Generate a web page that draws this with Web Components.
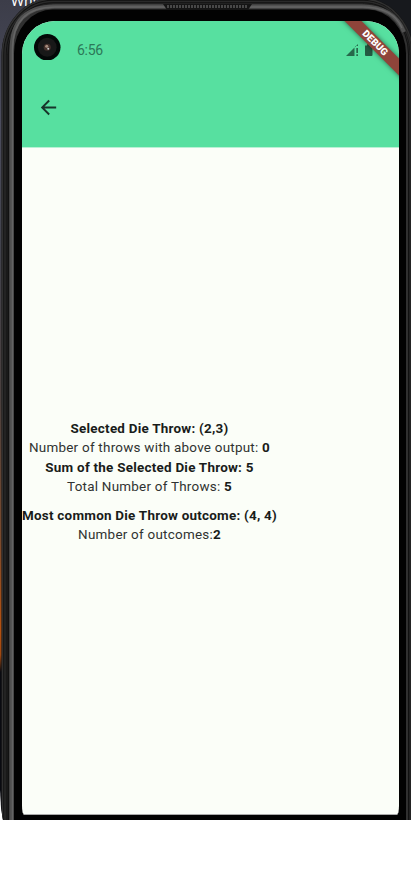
<!DOCTYPE html>
<html lang="en"><head><meta charset="utf-8"><title>Die throws</title>
<style>html,body{margin:0;background:#fff}body{width:411px;height:880px;overflow:hidden;font-family:Roboto,"Liberation Sans",sans-serif}</style></head>
<body>
<device-frame>
  <app-screen>
    <status-bar slot="top"></status-bar>
    <app-bar slot="top"></app-bar>
    <throw-stats></throw-stats>
    <debug-banner slot="overlay"></debug-banner>
  </app-screen>
</device-frame>
<script>
const define=(name,html)=>customElements.define(name,class extends HTMLElement{
  constructor(){super();this.attachShadow({mode:'open'}).innerHTML=html;}
});
define('device-frame',`<style>
:host{display:block;position:relative;width:411px;height:820px;overflow:hidden;box-sizing:border-box;padding:21px 12px 5px 22px;
 background:linear-gradient(90deg,transparent 330px,#17191d 331px),linear-gradient(#3c3d49 0,#4c4d5e 120px,#42434d 250px,#4b403e 400px,#7b4a2c 540px,#b6510f 630px,#a04810 655px,#090a10 672px,#090a10 810px);
 clip-path:polygon(0 0,411px 0,411px 820px,3px 820px,1px 808px,0 790px)}
.case{position:absolute;inset:0;width:411px;height:820px}
::slotted(*){position:relative}
</style>
<svg class="case" viewBox="0 0 411 820">
 <text x="11" y="6" font-size="14" fill="#fff" font-family="Noto Sans,sans-serif">Why</text>
 <rect x="1.5" y="-2" width="412" height="934" rx="51" ry="57" fill="#111"/>
 <rect x="2.5" y="-1" width="410" height="932" rx="50" ry="56" fill="none" stroke="#303030" stroke-width="1.5"/>
 <rect x="5" y="1.5" width="406" height="928" rx="48" ry="53" fill="none" stroke="#292929" stroke-width="1.6"/>
 <rect x="7" y="3.5" width="402.5" height="924" rx="46" ry="51" fill="none" stroke="#222" stroke-width="1"/>
 <rect x="9" y="4" width="399" height="924" rx="44" ry="50" fill="#303030"/>
 <path d="M11.5 820V50Q11.5 6.500 55 6.500H362Q394 6.500 404 32" fill="none" stroke="#505050" stroke-width="4"/>
 <path d="M12.5 820V50Q12.500 7 55 7H362Q393 7 402 28" fill="none" stroke="#646464" stroke-width="1.5"/>
 <rect x="14" y="9.5" width="392" height="919" rx="39" ry="44" fill="#020202"/>
 <path d="M163 4H252L248 10H167Z" fill="#151515"/>
 <path d="M167 6.500H248" stroke="#484848" stroke-width="3" stroke-dasharray="2 1"/>
</svg><slot></slot>`);
define('app-screen',`<style>
:host{display:flex;flex-direction:column;position:relative;width:377px;height:794px;background:#fbfef8;border-radius:33px 33px 2px 2px/33px 33px 9px 9px;overflow:hidden;box-sizing:border-box;border-bottom:1px solid #aaa}
header{height:126px;flex:none;background:#57e0a0;border-bottom:1px solid #b9f1d5;box-sizing:content-box}
main{flex:1;display:flex;align-items:center;padding-top:1px}
</style><header><slot name="top"></slot></header><main><slot></slot></main><slot name="overlay"></slot>`);
define('status-bar',`<style>
:host{display:flex;height:56px;align-items:center;color:#2c7858;font-size:14px;position:relative;box-sizing:border-box;padding-left:12px}
.cam{width:26.5px;height:26.5px;margin-top:-4px}.time{margin-left:16.500px;margin-top:2px;letter-spacing:-.3px}.icons{margin-left:auto;margin-right:25px;margin-top:2px;width:28px;height:14px}
</style>
<svg class="cam" viewBox="0 0 26 26"><circle cx="13" cy="13" r="13" fill="#030807"/><circle cx="13" cy="13" r="9.2" fill="#181818"/><circle cx="13" cy="13" r="3.5" fill="#43302b"/><circle cx="12.5" cy="12" r="1.5" fill="#a58b7d"/><circle cx="14" cy="14.5" r="1" fill="#ccc"/></svg>
<span class="time">6:56</span>
<svg class="icons" viewBox="0 0 28 14" fill="#27684b"><path d="M0 13L8.500 4.500V13Z"/><path d="M9 4L12 1V3H9ZM10.300 5H12V10H10.300ZM10.300 11.300H12V13H10.300Z"/><path d="M19 2.500H21V1.200H24V2.500H26.500V12Q26.500 13 25.500 13H20Q19 13 19 12Z" fill="#245a42"/></svg>`);
define('app-bar',`<style>:host{display:flex;height:61px;align-items:center;padding-left:15px}svg{width:23px;height:23px}</style>
<svg viewBox="0 0 24 24" fill="#17352a"><path d="M20 11H7.830l5.590-5.590L12 4l-8 8 8 8 1.410-1.410L7.830 13H20v-2z"/></svg>`);
define('throw-stats',`<style>
:host{display:block;color:#303331;font-size:13.44px;line-height:19.2px;letter-spacing:.24px;text-align:center;white-space:nowrap;width:255px}
p{margin:0}p.gap{margin-top:9.6px}b{font-weight:700;color:#191c1a}
</style>
<p><b>Selected Die Throw: (2,3)</b></p>
<p>Number of throws with above output: <b>0</b></p>
<p><b>Sum of the Selected Die Throw: 5</b></p>
<p>Total Number of Throws: <b>5</b></p>
<p class="gap"><b>Most common Die Throw outcome: (4, 4)</b></p>
<p>Number of outcomes:<b>2</b></p>`);
define('debug-banner',`<style>
:host{position:absolute;right:0;top:0;width:76px;height:76px;overflow:hidden}
div{position:absolute;left:-8px;top:16px;width:120px;height:12px;line-height:12px;background:#8f443a;box-shadow:0 0 5px #0008;transform:rotate(45deg);text-align:center;color:#fff;font-weight:900;font-size:9.8px}
</style><div>DEBUG</div>`);
</script></body></html>
